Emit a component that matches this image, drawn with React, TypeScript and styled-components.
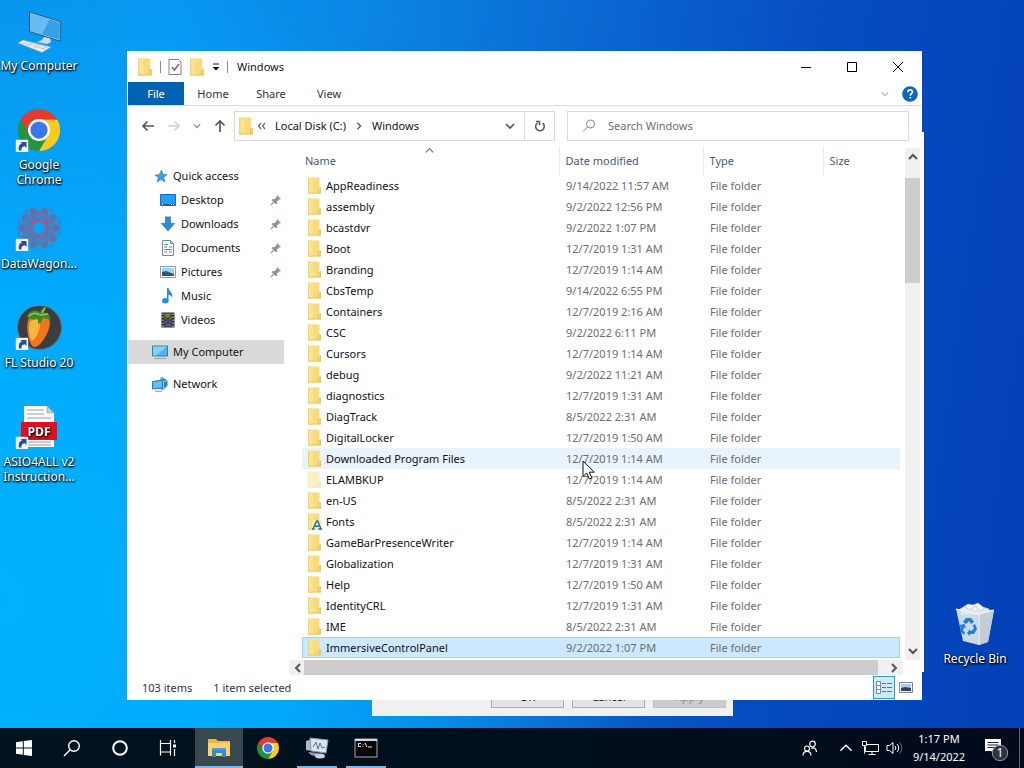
import React from "react";
import styled, { createGlobalStyle, css } from "styled-components";

const GlobalStyle = createGlobalStyle`
  * { box-sizing: border-box; }
  body { margin: 0; font-family: "Noto Sans", "Open Sans", sans-serif; font-size: 11px; line-height: 16px; color: #111; }
  button, input { font: inherit; color: inherit; border: 0; background: none; padding: 0; margin: 0; }
  button { display: flex; align-items: center; justify-content: center; }
  svg { display: block; flex: none; }
  ul { list-style: none; margin: 0; padding: 0; }
`;

/* ---------- desktop ---------- */

const Desktop = styled.div`
  min-height: 100vh;
  display: flex;
  flex-direction: column;
  overflow: hidden;
  background:
    radial-gradient(ellipse 660px 660px at 0% 78%, rgba(0, 180, 255, 0.95), rgba(0, 176, 255, 0.8) 45%, rgba(0, 150, 245, 0) 100%),
    linear-gradient(98deg, #0a92ec 0%, #0896f0 16%, #0b84e4 34%, #0a66d0 54%, #064cc0 74%, #0440b6 100%);
`;

const Workspace = styled.main`
  position: relative;
  flex: 1;
  min-height: 728px;
`;

const Shortcuts = styled.ul`
  width: 78px;
  padding-top: 9px;
`;

const Shortcut = styled.a`
  display: flex;
  flex-direction: column;
  align-items: center;
  gap: 5px;
  min-height: 99px;
  color: #fff;
  text-align: center;
  text-decoration: none;
  font-size: 12px;
  line-height: 15px;
  text-shadow: 0 1px 2px #000, 1px 1px 2px #000;
`;

const ShortcutLabel = styled.span`
  white-space: pre;
`;

const BinSpot = styled.div`
  position: absolute;
  right: 10px;
  top: 602px;
  width: 78px;
`;

const BackWindow = styled.div`
  position: absolute;
  left: 400px;
  right: 100px;
  top: 132px;
  height: 540px;
  background: #fdfdfd;
`;

const Dialog = styled.section`
  position: absolute;
  left: 372px;
  top: 640px;
  width: 361px;
  height: 76px;
  padding: 0 7px 8px;
  display: flex;
  justify-content: flex-end;
  align-items: flex-end;
  gap: 8px;
  background: #f0f0f0;
`;

const DialogButton = styled.button`
  width: 73px;
  height: 23px;
  border: 1px solid #adadad;
  background: #e3e3e3;
  &:disabled { background: #cccccc; border-color: #bfbfbf; color: #8d8d8d; }
`;

const Pointer = styled.div`
  position: absolute;
  left: 582px;
  top: 460px;
`;

/* ---------- explorer window ---------- */

const Explorer = styled.section`
  position: absolute;
  left: 127px;
  right: 102px;
  top: 51px;
  padding-left: 1px;
  background: #fff;
`;

const TitleBar = styled.header`
  display: flex;
  align-items: center;
  height: 31px;
  padding: 0 1px 0 9px;
`;

const QuickTools = styled.div`
  display: flex;
  align-items: center;
  gap: 7px;
  margin-right: 9px;
`;

const Divider = styled.span`
  width: 1px;
  height: 12px;
  background: #8a8a8a;
`;

const WindowTitle = styled.h1`
  flex: 1;
  margin: 0;
  font-size: 11px;
  font-weight: 400;
`;

const CaptionButton = styled.button`
  width: 46px;
  height: 30px;
`;

const Ribbon = styled.nav`
  display: flex;
  align-items: center;
  height: 24px;
  border-bottom: 1px solid #dadbdc;
  padding-right: 4px;
`;

const RibbonTab = styled.button<{ $primary?: boolean }>`
  width: 58px;
  height: 23px;
  color: #333;
  ${(p) => p.$primary && css`width: 56px; background: #0063b1; color: #fff;`}
`;

const Spacer = styled.span`
  flex: 1;
`;

const RibbonEnd = styled.div`
  display: flex;
  align-items: center;
  gap: 13px;
`;

const AddressRow = styled.div`
  display: flex;
  align-items: center;
  height: 40px;
  padding: 0 13px;
`;

const NavButtons = styled.div`
  display: flex;
  align-items: center;
  gap: 12px;
  width: 93px;
`;

const AddressBox = styled.div`
  display: flex;
  align-items: center;
  flex: 1;
  height: 30px;
  border: 1px solid #d9d9d9;
  padding-left: 3px;
`;

const Crumb = styled.button`
  margin: 0 9px;
`;

const DropButton = styled.button`
  width: 28px;
  height: 28px;
`;

const RefreshButton = styled(DropButton)`
  width: 30px;
  border-left: 1px solid #d9d9d9;
`;

const SearchBox = styled.label`
  display: flex;
  align-items: center;
  gap: 12px;
  flex: 0 0 342px;
  height: 30px;
  margin-left: 12px;
  padding-left: 14px;
  border: 1px solid #d9d9d9;
`;

const SearchInput = styled.input`
  flex: 1;
  min-width: 0;
  outline: 0;
  &::placeholder { color: #6d6d6d; opacity: 1; }
`;

const Body = styled.div`
  display: flex;
  height: 529px;
`;

const Sidebar = styled.nav`
  width: 156px;
  padding-top: 18px;
`;

const SideItem = styled.li<{ $child?: boolean; $active?: boolean; $apart?: boolean }>`
  display: flex;
  align-items: center;
  gap: 5px;
  height: 24px;
  padding: 0 2px 0 ${(p) => (p.$child ? 32 : 24)}px;
  margin-top: ${(p) => (p.$apart ? 8 : 0)}px;
  background: ${(p) => (p.$active ? "#d9d9d9" : "transparent")};
`;

const SideLink = styled.a`
  flex: 1;
  color: inherit;
  text-decoration: none;
`;

const ListPane = styled.div`
  flex: 1;
  min-width: 0;
  display: flex;
  flex-direction: column;
  padding: 0 2px 0 5px;
`;

const ListArea = styled.div`
  flex: 1;
  display: flex;
  gap: 5px;
  padding-left: 13px;
`;

const TableWrap = styled.div`
  flex: 1;
  min-width: 0;
`;

const FileTable = styled.table`
  width: 100%;
  table-layout: fixed;
  border-collapse: collapse;
`;

const HeadCell = styled.th<{ $width?: number; $first?: boolean }>`
  position: relative;
  width: ${(p) => (p.$width ? `${p.$width}px` : "auto")};
  height: 29px;
  padding: 0 0 0 ${(p) => (p.$first ? 3 : 6)}px;
  border-left: ${(p) => (p.$first ? 0 : 1)}px solid #ececec;
  color: #4c5a6c;
  font-weight: 400;
  text-align: left;
`;

const SortMark = styled.span`
  position: absolute;
  left: 123px;
  top: 0;
`;

const FileRow = styled.tr<{ $state?: "hover" | "selected" }>`
  height: 21px;
  ${(p) => p.$state === "hover" && css`background: #e9f3fc;`}
  ${(p) => p.$state === "selected" && css`background: #cce8ff; outline: 1px solid #99d1ff; outline-offset: -1px;`}
`;

const Cell = styled.td`
  padding: 0 0 0 7px;
  color: #6d6d6d;
  white-space: nowrap;
`;

const NameCell = styled.td`
  padding: 0 0 0 5px;
`;

const NameContent = styled.span`
  display: flex;
  align-items: center;
  gap: 4px;
`;

const VScroll = styled.div`
  width: 15px;
  display: flex;
  flex-direction: column;
  margin: 2px 0 0;
  background: #f0f0f0;
`;

const HScroll = styled.div`
  display: flex;
  height: 15px;
  margin-right: 17px;
  background: #f0f0f0;
`;

const ScrollArrow = styled.button`
  flex: 0 0 18px;
`;

const Thumb = styled.span<{ $vertical?: boolean }>`
  background: #cdcdcd;
  ${(p) => (p.$vertical ? css`flex: 0 0 105px; margin-top: 12px;` : css`flex: 1; margin: 0 7px 0 -3px;`)}
`;

const StatusBar = styled.footer`
  display: flex;
  align-items: center;
  gap: 21px;
  height: 25px;
  padding: 0 5px 0 14px;
  color: #2b3648;
`;

const ViewButton = styled.button<{ $on?: boolean }>`
  width: 22px;
  height: 23px;
  ${(p) => p.$on && css`background: #cceaf5; border: 1px solid #3a9bb5;`}
`;

const ViewButtons = styled.div`
  display: flex;
`;

/* ---------- taskbar ---------- */

const Taskbar = styled.footer`
  display: flex;
  height: 40px;
  background: linear-gradient(90deg, #02141f, #010f1e 50%, #020a1c);
  color: #fff;
`;

const TaskButton = styled.button<{ $state?: "active" | "open" }>`
  position: relative;
  width: 48px;
  height: 40px;
  ${(p) => p.$state && css`
    &::after {
      content: "";
      position: absolute;
      left: ${p.$state === "active" ? 0 : 4}px;
      right: ${p.$state === "active" ? 0 : 4}px;
      bottom: 0;
      height: 2px;
      background: #76b9ed;
    }
  `}
  ${(p) => p.$state === "active" && css`background: #38484f;`}
`;

const Pinned = styled.div`
  display: flex;
  gap: 1px;
  margin-left: 3px;
`;

const Tray = styled.div`
  display: flex;
  align-items: center;
  padding-right: 4px;
`;

const TrayButton = styled.button<{ $w?: number }>`
  width: ${(p) => p.$w ?? 24}px;
  height: 40px;
`;

const Clock = styled.time`
  width: 66px;
  text-align: center;
  line-height: 18px;
`;

const ShowDesktop = styled.span`
  width: 1px;
  height: 40px;
  background: #5d6672;
`;

/* ---------- drawings ---------- */

const Folder = ({ pale, font, large }: { pale?: boolean; font?: boolean; large?: boolean }) => (
  <svg width={large ? 16 : 15} height={large ? 18 : 17} viewBox="0 0 15 17">
    <g opacity={pale ? 0.45 : 1}>
      <path d="M1 .5h11.500V11l1.500 1v4.500H1z" fill="#f8dc7c" />
      <path d="M1 .5h5v16H1z" fill="#fae48f" />
      <path d="M1 .5h1v16H1z" fill="#efd377" />
      <path d="M1 15.500h13v1H1z" fill="#edc963" />
      <path d="M11.500 15.500v-4l2-1v5z" fill="#f5d673" stroke="#dfb754" strokeWidth=".6" />
    </g>
    {font && (
      <>
        <path d="M5 7h9.500v10H5z" fill="#f3e9b4" />
        <path d="M6 16L9.700 8h1L14 16M7.500 13.300h4.500M5 16h2.500M11.500 16h3.500" fill="none" stroke="#1f7389" strokeWidth="1.400" />
      </>
    )}
  </svg>
);

const Chevron = ({ dir, size = 10, color = "#555", weight = 1.6 }: { dir: "up" | "down" | "left" | "right"; size?: number; color?: string; weight?: number }) => {
  const d = { up: "M1 7l4-4 4 4", down: "M1 3l4 4 4-4", left: "M7 1L3 5l4 4", right: "M3 1l4 4-4 4" }[dir];
  return (
    <svg width={size} height={size} viewBox="0 0 10 10">
      <path d={d} fill="none" stroke={color} strokeWidth={weight} />
    </svg>
  );
};

const Arrow = ({ dir, color }: { dir: "left" | "right" | "up"; color: string }) => {
  const turn = { left: 0, up: 90, right: 180 }[dir];
  return (
    <svg width="14" height="14" viewBox="0 0 14 14">
      <path transform={`rotate(${turn} 7 7)`} d="M13 7H2M6.500 2.500L2 7l4.500 4.500" fill="none" stroke={color} strokeWidth="1.700" />
    </svg>
  );
};

const ChromeArt = ({ size }: { size: number }) => (
  <svg width={size} height={size} viewBox="0 0 48 48">
    <path d="M24 13h19.050A22 22 0 0 1 24 46l9.530-16.500z" fill="#fccb1c" />
    <path d="M33.530 29.500L24 46A22 22 0 0 1 4.950 13l9.520 16.500z" fill="#24933f" />
    <path d="M14.470 29.500L4.950 13A22 22 0 0 1 43.050 13H24z" fill="#e33b2e" />
    <circle cx="24" cy="24" r="11.500" fill="#fff" />
    <circle cx="24" cy="24" r="9" fill="#3978e8" />
  </svg>
);

const LinkBadge = () => (
  <g>
    <path d="M0 33h12v12H0z" fill="#f5f8fc" stroke="#d4dce6" strokeWidth=".5" />
    <path d="M3 43.500c-1-4 .5-6.500 3-7L4.500 35h6v6L8.800 39.200C6.500 39.500 5 41 5.500 43.500z" fill="#2b4f96" />
  </g>
);

const WithBadge = ({ children }: { children: React.ReactNode }) => (
  <svg width="48" height="44" viewBox="-1 1 48 44">
    {children}
    <LinkBadge />
  </svg>
);

const ComputerArt = () => (
  <svg width="48" height="44" viewBox="15 9 48 44">
    <path d="M44 37l6 1 1 4-4 2-10-2 5-2z" fill="#ccdcea" />
    <path d="M29.500 12L60 21.500V41L29.500 31.500z" fill="#b9def5" stroke="#203c56" strokeWidth=".8" />
    <path d="M30.500 13.300l28.500 9V39.700L30.500 30.800z" fill="#359fe7" />
    <path d="M30.500 13.300l19 6L42 34.400l-11.500-3.600z" fill="#67bdf2" />
    <path d="M18 43l5-3 28 7-9 5.500z" fill="#eef1f4" stroke="#8fa0b0" strokeWidth=".6" />
    <path d="M22 43l23 6M25 41.500l23 6M27 46l5-3M34 48l5-3M41 50l5-3" stroke="#aab6c1" strokeWidth=".6" />
  </svg>
);

const WagonArt = () => (
  <WithBadge>
    <g fill="none" stroke="#5f70a6" strokeWidth="1">
      {[0, 36, 72, 108, 144, 180, 216, 252, 288, 324].map((a) => (
        <g key={a} transform={`rotate(${a} 23 22)`}>
          <path d="M23 0l6 5-6 9-6-9zM16 2l7 9 7-9M16 2l-1 6M30 2l1 6" />
          <path d="M20 4l3 4 3-4M19 11l4 5 4-5" stroke="#b0527c" strokeWidth="1.400" />
        </g>
      ))}
    </g>
  </WithBadge>
);

const FruitArt = () => (
  <WithBadge>
    <circle cx="23.500" cy="22.500" r="22" fill="#3b3d44" stroke="#687079" />
    <path d="M13 13c5-5 16-5 20 0 3 7-2 18-8 25-3 4-8 6-10 1-4-8-5-19-2-26z" fill="#f0761c" />
    <path d="M14 17c4-4 10-3 10 2 0 8-4 14-8 17-3-5-4-13-2-19z" fill="#ffb63c" />
    <path d="M11 12c1-6 8-8 13-5 2-3 4-6 8-7-2 3-4 6-5 8 5-1 8 2 7 8-3-3-5-3-7-3-1 3-2 5-5 6 0-3 0-5-1-6-3 3-7 1-10-1z" fill="#3f8a28" />
    <path d="M13 11c4-4 8-3 11-1l8-1M26 8l3-5" fill="none" stroke="#8fc94f" strokeWidth="1.500" />
  </WithBadge>
);

const PdfArt = () => (
  <WithBadge>
    <path d="M8 2h23l7 7v34H8z" fill="#fbfbfb" />
    <path d="M31 2l7 7h-7z" fill="#c4ccd4" stroke="#8d98a5" strokeWidth=".6" />
    <path d="M11 6h17M11 10h17M11 14h24M11 38h24M11 41h24" stroke="#9c9c9c" strokeWidth="1" />
    <path d="M5 18h36v18H5z" fill="#df1021" />
    <text x="23" y="32" textAnchor="middle" fill="#fff" fontFamily="Open Sans, sans-serif" fontWeight="700" fontSize="12">PDF</text>
  </WithBadge>
);

const BinArt = () => (
  <svg width="48" height="44" viewBox="0 0 48 44">
    <path d="M9 7l8-5 5 1 5-2 5 4 6 2-1 6H10z" fill="#f1f5f8" stroke="#a9b8c6" strokeWidth=".7" />
    <path d="M14 5l5 3 6-4 4 5 5-3" fill="none" stroke="#bac7d2" />
    <path d="M5 7l38 1-6 32-9 3-16-4z" fill="#dde5ec" opacity=".92" />
    <path d="M28 12l15-4-6 32-9 3z" fill="#c3cdd7" />
    <path d="M5 7l23 5 15-4" fill="none" stroke="#f7fafc" strokeWidth="1.200" />
    <path d="M28 12v31" stroke="#eef2f5" />
    <g fill="#1e7fd0">
      <path d="M12 20l3-4h5l3 4-3 2-2-3-3 3z" />
      <path d="M24 22l2 5-3 5h-4v2l-3-3 3-4v2l3-1 1-3-2-1z" />
      <path d="M8.500 23l5-1 1.500 4-2-.5-1 3 2 2-1 2.500-4-4 .5-4z" />
    </g>
  </svg>
);

const SideArt = ({ name }: { name: string }) => {
  const art: Record<string, React.ReactNode> = {
    "Quick access": <path d="M9.500 2l1.500 4.300 4 .2-3.200 2.900L12.800 14 9 11.400 5.200 14l1.100-4.400L3 7l4.400-.4z" fill="#3aa3e3" stroke="#1c78bd" strokeWidth=".6" />,
    Desktop: <><path d="M.5 2.500h15v11H.5z" fill="#1da1f7" stroke="#0f6fc0" /><path d="M1 12h14v1.500H1z" fill="#1561a8" /><path d="M2 12.500h1M11 12.500h1M13 12.500h1" stroke="#fff" /></>,
    Downloads: <path d="M5 .5h6V7h4.500L8 15.500.5 7H5z" fill="#3b87d4" />,
    Documents: <><path d="M2.500.5h8l3 3v12h-11z" fill="#fff" stroke="#7d8b95" /><path d="M10.500.5v3h3" fill="none" stroke="#7d8b95" /><path d="M4 4.500h4M4 7h3M9 7h3M4 9.500h8M4 12h3M9 12h3" stroke="#3d9bb7" strokeWidth="1.200" /></>,
    Pictures: <><path d="M.5 2.500h15v11H.5z" fill="#fff" stroke="#939ca5" /><path d="M2 4h12v8H2z" fill="#9dd3f3" /><path d="M2 8l4-1 8 3v2H2z" fill="#2d5874" /></>,
    Music: <><path d="M7 0h1.500c.5 3.500 5 4.500 3.500 10-.3-2-1.500-3-3.500-3.500V13H7z" fill="#1e90e0" /><ellipse cx="5.300" cy="12.800" rx="3.300" ry="2.700" fill="#1e90e0" /></>,
    Videos: <><path d="M1.500.5h13v15h-13z" fill="#25282c" /><path d="M4.500 1.500h7v6h-7z" fill="#7a8432" /><path d="M4.500 8.500h7v6h-7z" fill="#565aa8" /><path d="M5 5l3 2 3-4M5 13l3-3 3 2" stroke="#222" fill="none" /><path d="M3 1.500v14M13 1.500v14" stroke="#e9e9e9" strokeDasharray="1.500 1.500" /></>,
    "My Computer": <><path d="M.5 2h15v10H.5z" fill="#4db5f2" stroke="#2f7fae" /><path d="M1 2.500h14L4 11.500H1z" fill="#86d0f8" /><path d="M2 14.500h12" stroke="#8da5b4" /></>,
    Network: <><path d="M9 .500l6.500 4v5L11 14l-4-2z" fill="#327fb6" /><path d="M9 1l2.500 5 3.500-1.500M11.500 6v7" stroke="#8bd1f5" fill="none" /><path d="M.5 5.500l10-1.500v8l-10 1z" fill="#62bcec" stroke="#2679ab" /><path d="M3 15.200h7" stroke="#6b98b3" fill="none" /></>,
  };
  return <svg width="16" height="16" viewBox="0 0 16 16">{art[name]}</svg>;
};

const Pin = () => (
  <svg width="12" height="12" viewBox="0 0 12 12">
    <path d="M7 1l4 4-1.200.6-.8-.1-2 2 .1 2L6 10.500 1.500 6 2.600 5l2 .1 2-2L6.500 2z" fill="#8f959a" />
    <path d="M3.800 8.200L1 11" stroke="#8f959a" strokeWidth="1.100" />
  </svg>
);

/* ---------- data ---------- */

const shortcuts = [
  { label: "My Computer", art: <ComputerArt /> },
  { label: "Google\nChrome", art: <WithBadge><svg x="0" y="0" width="46" height="46"><ChromeArt size={46} /></svg></WithBadge> },
  { label: "DataWagon...", art: <WagonArt /> },
  { label: "FL Studio 20", art: <FruitArt /> },
  { label: "ASIO4ALL v2\nInstruction...", art: <PdfArt /> },
];

const places = [
  { name: "Quick access" },
  { name: "Desktop", child: true, pin: true },
  { name: "Downloads", child: true, pin: true },
  { name: "Documents", child: true, pin: true },
  { name: "Pictures", child: true, pin: true },
  { name: "Music", child: true },
  { name: "Videos", child: true },
  { name: "My Computer", active: true, apart: true },
  { name: "Network", apart: true },
];

const files: [string, string][] = [
  ["AppReadiness", "9/14/2022 11:57 AM"],
  ["assembly", "9/2/2022 12:56 PM"],
  ["bcastdvr", "9/2/2022 1:07 PM"],
  ["Boot", "12/7/2019 1:31 AM"],
  ["Branding", "12/7/2019 1:14 AM"],
  ["CbsTemp", "9/14/2022 6:55 PM"],
  ["Containers", "12/7/2019 2:16 AM"],
  ["CSC", "9/2/2022 6:11 PM"],
  ["Cursors", "12/7/2019 1:14 AM"],
  ["debug", "9/2/2022 11:21 AM"],
  ["diagnostics", "12/7/2019 1:31 AM"],
  ["DiagTrack", "8/5/2022 2:31 AM"],
  ["DigitalLocker", "12/7/2019 1:50 AM"],
  ["Downloaded Program Files", "12/7/2019 1:14 AM"],
  ["ELAMBKUP", "12/7/2019 1:14 AM"],
  ["en-US", "8/5/2022 2:31 AM"],
  ["Fonts", "8/5/2022 2:31 AM"],
  ["GameBarPresenceWriter", "12/7/2019 1:14 AM"],
  ["Globalization", "12/7/2019 1:31 AM"],
  ["Help", "12/7/2019 1:50 AM"],
  ["IdentityCRL", "12/7/2019 1:31 AM"],
  ["IME", "8/5/2022 2:31 AM"],
  ["ImmersiveControlPanel", "9/2/2022 1:07 PM"],
];

const rowState = (name: string) =>
  name === "Downloaded Program Files" ? "hover" : name === "ImmersiveControlPanel" ? "selected" : undefined;

/* ---------- page ---------- */

const ExplorerWindow = () => (
  <Explorer aria-label="Windows">
    <TitleBar>
      <QuickTools>
        <Folder large />
        <Divider />
        <button aria-label="Properties">
          <svg width="14" height="18" viewBox="0 0 14 18">
            <path d="M1 1.500h9.500L13 4v12.500H1z" fill="#fff" stroke="#85807f" />
            <path d="M4 9l2.500 3L11 6" fill="none" stroke="#a0564f" strokeWidth="1.500" />
          </svg>
        </button>
        <button aria-label="New folder"><Folder large /></button>
        <button aria-label="Customize toolbar">
          <svg width="8" height="8" viewBox="0 0 8 8"><path d="M1 1h6" stroke="#111" /><path d="M.5 4h7L4 7.500z" fill="#111" /></svg>
        </button>
        <Divider />
      </QuickTools>
      <WindowTitle>Windows</WindowTitle>
      <CaptionButton aria-label="Minimize">
        <svg width="12" height="12"><path d="M1 6.500h10" stroke="#000" /></svg>
      </CaptionButton>
      <CaptionButton aria-label="Maximize">
        <svg width="12" height="12"><path d="M1.500 1.500h9v9h-9z" fill="none" stroke="#000" /></svg>
      </CaptionButton>
      <CaptionButton aria-label="Close">
        <svg width="12" height="12"><path d="M1 1l10 10M11 1L1 11" stroke="#000" /></svg>
      </CaptionButton>
    </TitleBar>

    <Ribbon>
      <RibbonTab $primary>File</RibbonTab>
      <RibbonTab>Home</RibbonTab>
      <RibbonTab>Share</RibbonTab>
      <RibbonTab>View</RibbonTab>
      <Spacer />
      <RibbonEnd>
        <button aria-label="Expand the ribbon"><Chevron dir="down" size={8} color="#b4b8bd" /></button>
        <button aria-label="Help">
          <svg width="16" height="16" viewBox="0 0 16 16">
            <circle cx="8" cy="8" r="7.800" fill="#0f67b8" />
            <path d="M5.800 6.200c0-3.200 4.700-3 4.700-.4 0 1.700-2.200 1.900-2.200 3.900M8.300 11v1.600" fill="none" stroke="#fff" strokeWidth="1.600" />
          </svg>
        </button>
      </RibbonEnd>
    </Ribbon>

    <AddressRow>
      <NavButtons>
        <button aria-label="Back"><Arrow dir="left" color="#555" /></button>
        <button aria-label="Forward"><Arrow dir="right" color="#d0d0d0" /></button>
        <button aria-label="Recent locations"><Chevron dir="down" size={8} color="#888" /></button>
        <button aria-label="Up"><Arrow dir="up" color="#555" /></button>
      </NavButtons>
      <AddressBox>
        <Folder large />
        <svg width="12" height="10" viewBox="0 0 12 10"><path d="M7 2L4.500 5 7 8M11 2L8.500 5 11 8" fill="none" stroke="#666" strokeWidth="1.200" /></svg>
        <Crumb>Local Disk (C:)</Crumb>
        <Chevron dir="right" size={8} color="#555" />
        <Crumb>Windows</Crumb>
        <Spacer />
        <DropButton aria-label="Previous locations"><Chevron dir="down" /></DropButton>
        <RefreshButton aria-label="Refresh">
          <svg width="12" height="12" viewBox="0 0 12 12">
            <path d="M3.500 3A4.300 4.300 0 1 0 8.700 3.200" fill="none" stroke="#555" strokeWidth="1.500" />
            <path d="M2 1.500h3.500V5" fill="none" stroke="#555" strokeWidth="1.500" />
          </svg>
        </RefreshButton>
      </AddressBox>
      <SearchBox>
        <svg width="14" height="14" viewBox="0 0 14 14">
          <circle cx="8.500" cy="5" r="4" fill="none" stroke="#888" />
          <path d="M5.500 8L1 12.500" stroke="#888" />
        </svg>
        <SearchInput aria-label="Search Windows" placeholder="Search Windows" />
      </SearchBox>
    </AddressRow>

    <Body>
      <Sidebar>
        <ul>
          {places.map((p) => (
            <SideItem key={p.name} $child={p.child} $active={p.active} $apart={p.apart}>
              <SideArt name={p.name} />
              <SideLink href="#">{p.name}</SideLink>
              {p.pin && <Pin />}
            </SideItem>
          ))}
        </ul>
      </Sidebar>
      <ListPane>
        <ListArea>
          <TableWrap>
            <FileTable>
              <thead>
                <tr>
                  <HeadCell $first $width={257}>
                    Name
                    <SortMark><Chevron dir="up" size={9} color="#666" weight={1.2} /></SortMark>
                  </HeadCell>
                  <HeadCell $width={144}>Date modified</HeadCell>
                  <HeadCell $width={120}>Type</HeadCell>
                  <HeadCell>Size</HeadCell>
                </tr>
              </thead>
              <tbody>
                {files.map(([name, date]) => (
                  <FileRow key={name} $state={rowState(name)}>
                    <NameCell>
                      <NameContent>
                        <Folder pale={name === "ELAMBKUP"} font={name === "Fonts"} />
                        {name}
                      </NameContent>
                    </NameCell>
                    <Cell>{date}</Cell>
                    <Cell>File folder</Cell>
                    <Cell />
                  </FileRow>
                ))}
              </tbody>
            </FileTable>
          </TableWrap>
          <VScroll>
            <ScrollArrow aria-label="Scroll up"><Chevron dir="up" weight={2} /></ScrollArrow>
            <Thumb $vertical />
            <Spacer />
            <ScrollArrow aria-label="Scroll down"><Chevron dir="down" weight={2} /></ScrollArrow>
          </VScroll>
        </ListArea>
        <HScroll>
          <ScrollArrow aria-label="Scroll left"><Chevron dir="left" weight={2} /></ScrollArrow>
          <Thumb />
          <ScrollArrow aria-label="Scroll right"><Chevron dir="right" weight={2} /></ScrollArrow>
        </HScroll>
      </ListPane>
    </Body>

    <StatusBar>
      <span>103 items</span>
      <span>1 item selected</span>
      <Spacer />
      <ViewButtons>
        <ViewButton $on aria-label="Details view">
          <svg width="18" height="15" viewBox="0 0 18 15">
            <path d="M1.500 1.500h4v4h-4zM1.500 5.500h4v4h-4zM1.500 9.500h4v4h-4z" fill="#fff" stroke="#7c84a8" />
            <path d="M7 3.500h4M12 3.500h5M7 7.500h4M12 7.500h5M7 11.500h4M12 11.500h5" stroke="#4d7b8c" />
          </svg>
        </ViewButton>
        <ViewButton aria-label="Large icons view">
          <svg width="14" height="12" viewBox="0 0 14 12">
            <path d="M.5.500h13v10H.5z" fill="#fff" stroke="#7a80a0" />
            <path d="M2 2h10v7H2z" fill="#a8cdea" /><path d="M2 6l4-1 6 1v3H2z" fill="#2c4458" />
          </svg>
        </ViewButton>
      </ViewButtons>
    </StatusBar>
  </Explorer>
);

const TaskbarStrip = () => (
  <Taskbar>
    <TaskButton aria-label="Start">
      <svg width="18" height="18" viewBox="0 0 18 18"><path d="M1 3.300L7.800 2.300V8.500H1zM8.800 2.100L17 1v7.500H8.800zM1 9.500h6.800v6.200L1 14.700zM8.800 9.500H17V17l-8.200-1.100z" fill="#fff" /></svg>
    </TaskButton>
    <TaskButton aria-label="Search">
      <svg width="18" height="18" viewBox="0 0 18 18"><circle cx="11" cy="7" r="5.300" fill="none" stroke="#fff" strokeWidth="1.400" /><path d="M7 11l-6 6" stroke="#fff" strokeWidth="1.400" /></svg>
    </TaskButton>
    <TaskButton aria-label="Cortana">
      <svg width="18" height="18"><circle cx="9" cy="9" r="6.800" fill="none" stroke="#fff" strokeWidth="2" /></svg>
    </TaskButton>
    <TaskButton aria-label="Task view">
      <svg width="18" height="18" viewBox="0 0 18 18">
        <path d="M1.500 1v3.500h10V1M1.500 16.500V13h10v3.500M1.500 4.500h10V13h-10zM15.500 1v3M15.500 10v7" fill="none" stroke="#fff" strokeWidth="1.200" />
        <path d="M14 5.500h3v3h-3z" fill="#fff" />
      </svg>
    </TaskButton>
    <Pinned>
      <TaskButton $state="active" aria-label="File Explorer">
        <svg width="22" height="20" viewBox="0 0 22 20">
          <path d="M0 1h8l2 2h12v15H0z" fill="#f2b73c" />
          <path d="M0 5h22v13H0z" fill="#fad468" />
          <path d="M4 10h14v9h-4v-4H8v4H4z" fill="#3e87c8" />
          <path d="M4 10h14v2H4z" fill="#4f9ddd" />
        </svg>
      </TaskButton>
      <TaskButton aria-label="Google Chrome"><ChromeArt size={24} /></TaskButton>
      <TaskButton $state="open" aria-label="Monitor">
        <svg width="24" height="22" viewBox="0 0 24 22">
          <path d="M1 4l6-2v12l-6-1z" fill="#aebbc4" />
          <path d="M5 1l18 2-2 13-15-2z" fill="#dbe5ec" stroke="#8397a4" />
          <path d="M8 10l3-5 2 7 2-6 2 5 3-1" fill="none" stroke="#55788d" />
          <path d="M3 15l10 1v4l-7-2z" fill="#8fa0ab" />
          <ellipse cx="15" cy="19" rx="5" ry="2.500" fill="#cbd4da" />
        </svg>
      </TaskButton>
      <TaskButton $state="open" aria-label="Command Prompt">
        <svg width="24" height="20" viewBox="0 0 24 20">
          <path d="M1 1h22v18H1z" fill="#080808" stroke="#a5a9ad" />
          <path d="M1 1h22v2H1z" fill="#d4d8dc" />
          <path d="M7 5.500H4.500v3H7M9 6v.8M9 8v.8M11 5l2 4M14 9h4" fill="none" stroke="#e8e8e8" />
        </svg>
      </TaskButton>
    </Pinned>
    <Spacer />
    <Tray>
      <TrayButton $w={48} aria-label="People">
        <svg width="16" height="17" viewBox="0 0 16 17" fill="none" stroke="#fff" strokeWidth="1.200">
          <circle cx="10.500" cy="4" r="2.800" /><circle cx="5" cy="8.500" r="2.500" />
          <path d="M1 15.500c0-5.500 8-5.500 8 0M9.500 8.500c2.500-1.500 5 .5 5 3.500" />
        </svg>
      </TrayButton>
      <TrayButton aria-label="Show hidden icons"><Chevron dir="up" size={14} color="#fff" weight={1} /></TrayButton>
      <TrayButton aria-label="Network">
        <svg width="17" height="16" viewBox="0 0 17 16" fill="none" stroke="#fff">
          <path d="M5 4.500h11.500v7H3.500V6.500M10 11.500v3M6.500 14.500h7M.5 1.500h4v4h-4zM2.500 5.500v8" />
        </svg>
      </TrayButton>
      <TrayButton aria-label="Volume">
        <svg width="17" height="14" viewBox="0 0 17 14" fill="none" stroke="#fff">
          <path d="M1 4.500h2.500L7 1.500v11L3.500 9.500H1zM9 5c1 1.200 1 2.800 0 4M11 3c2.200 2.500 2.200 5.500 0 8" />
          <path d="M13.500 1.500c3 3.500 3 7.500 0 11" stroke="#777" />
        </svg>
      </TrayButton>
      <Clock>1:17 PM<br />9/14/2022</Clock>
      <TrayButton $w={47} aria-label="1 new notification">
        <svg width="26" height="26" viewBox="0 0 26 26">
          <path d="M2 4h16v12h-5v4l-5-4H2z" fill="#fff" />
          <path d="M4.500 7.500h11M4.500 10h11M4.500 12.500h8" stroke="#111d28" />
          <circle cx="17" cy="18" r="7.700" fill="#2b333e" stroke="#909aa4" />
          <text x="17" y="22" textAnchor="middle" fontSize="12" fill="#fff">1</text>
        </svg>
      </TrayButton>
      <ShowDesktop />
    </Tray>
  </Taskbar>
);

const DesktopLink = ({ label, art }: { label: string; art: React.ReactNode }) => (
  <Shortcut href="#">
    {art}
    <ShortcutLabel>{label}</ShortcutLabel>
  </Shortcut>
);

export default function App() {
  return (
    <Desktop>
      <GlobalStyle />
      <Workspace>
        <Shortcuts>
          {shortcuts.map((s) => (
            <li key={s.label}><DesktopLink {...s} /></li>
          ))}
        </Shortcuts>
        <BinSpot><DesktopLink label="Recycle Bin" art={<BinArt />} /></BinSpot>
        <BackWindow />
        <Dialog aria-label="Properties">
          <DialogButton>OK</DialogButton>
          <DialogButton>Cancel</DialogButton>
          <DialogButton disabled>Apply</DialogButton>
        </Dialog>
        <ExplorerWindow />
        <Pointer>
          <svg width="14" height="21" viewBox="0 0 14 21"><path d="M1 1v15.500l3.700-3.500 2.600 6 2.500-1.100-2.500-5.700h5z" fill="#fff" stroke="#111" /></svg>
        </Pointer>
      </Workspace>
      <TaskbarStrip />
    </Desktop>
  );
}
